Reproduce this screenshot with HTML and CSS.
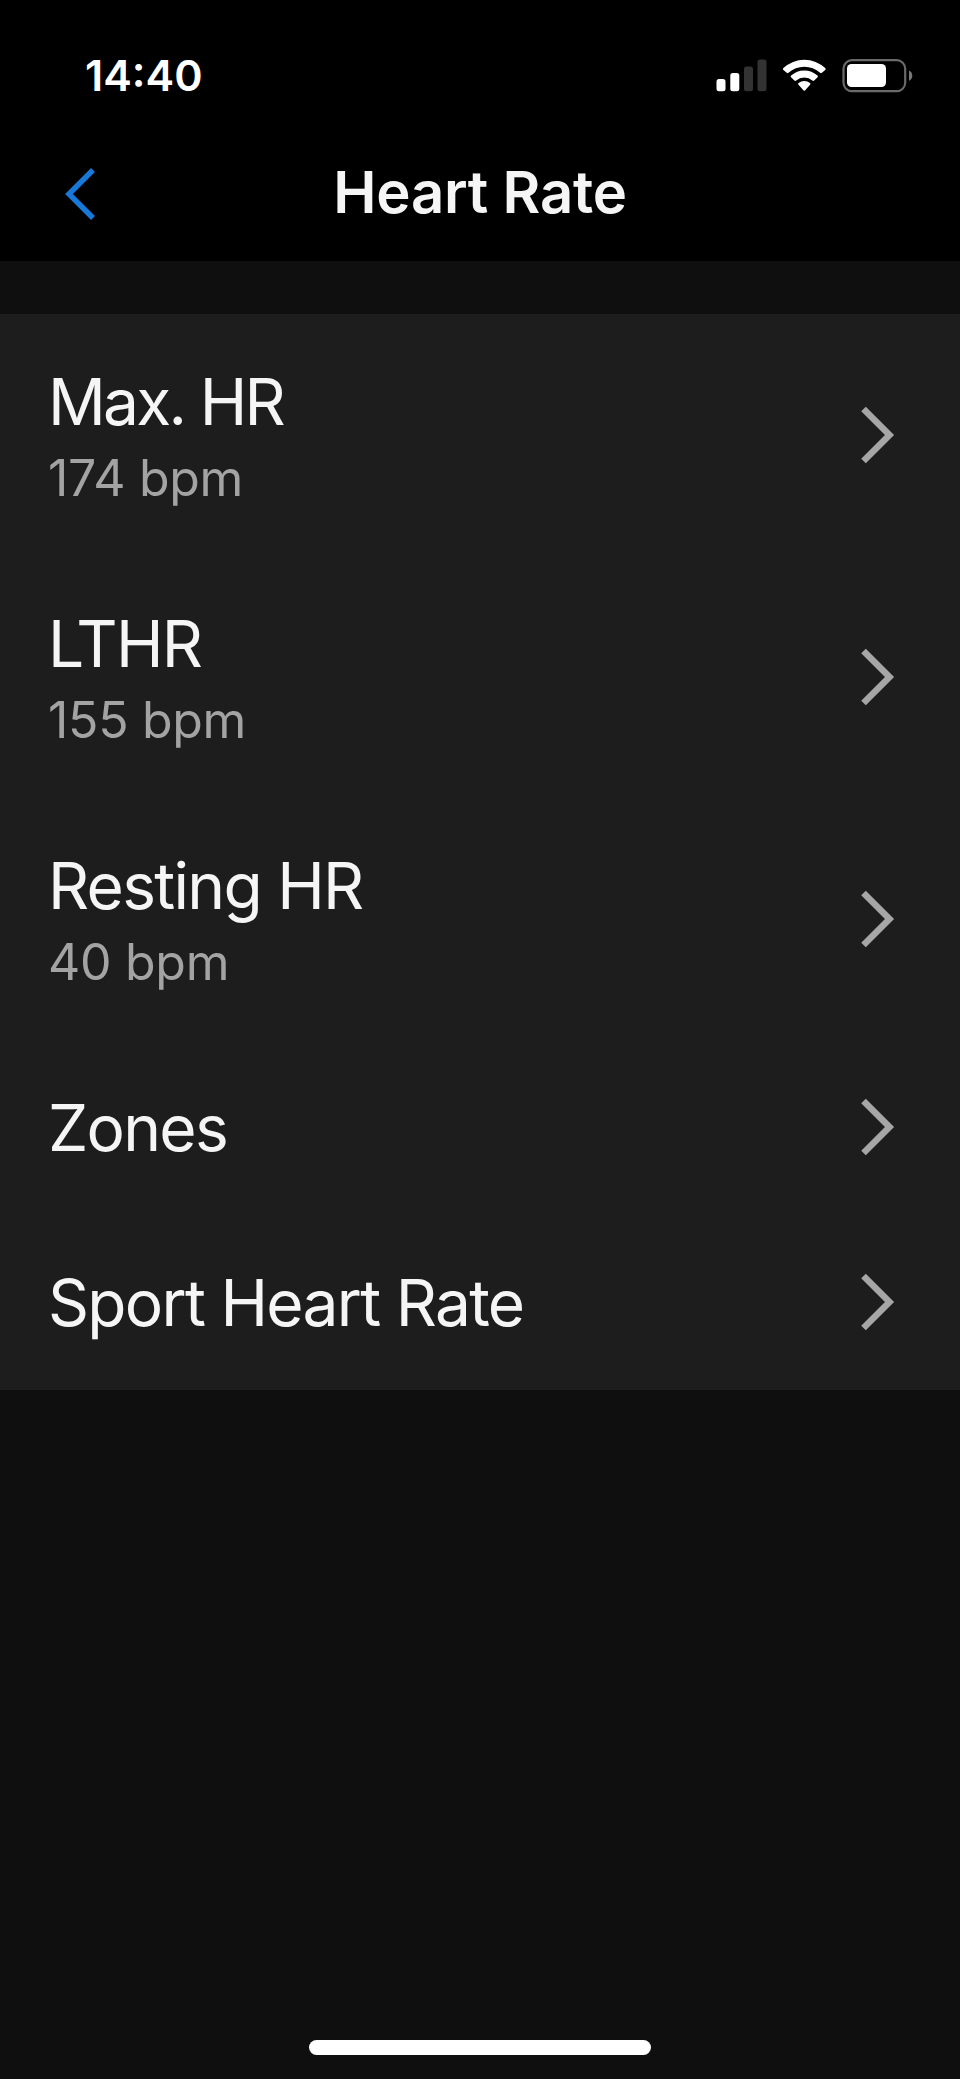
FILE: index.html
```html
<!DOCTYPE html>
<html lang="en">
<head>
<meta charset="UTF-8" />
<meta name="viewport" content="width=device-width, initial-scale=1.0" />
<title>Heart Rate</title>
<link rel="stylesheet" href="styles.css">
</head>
<body>
<div class="screen">
  <header class="header">
    <div class="status-bar">
      <span class="time">14:40</span>
      <svg class="status-icons" width="200" height="40" viewBox="714 56 200 40">
        <!-- signal -->
        <rect x="716.5" y="79" width="9" height="12.3" rx="2.5" fill="#fff"/>
        <rect x="730.3" y="73" width="9" height="18.3" rx="2.5" fill="#fff"/>
        <rect x="744" y="66.5" width="9" height="24.8" rx="2.5" fill="#333"/>
        <rect x="757.5" y="59.5" width="9" height="31.8" rx="2.5" fill="#333"/>
        <!-- wifi -->
        <g fill="#fff">
          <path d="M783.4 69.9 Q782.5 69 783.4 68.1 A30.5 30.5 0 0 1 825.2 68.1 Q826.1 69 825.2 69.9 L821.9 72.8 Q821 73.6 820.1 72.8 A23.4 23.4 0 0 0 788.5 72.8 Q787.6 73.6 786.7 72.8 Z"/>
          <path d="M791 77.3 Q790.2 76.4 791.1 75.6 A19.4 19.4 0 0 1 817.5 75.6 Q818.4 76.4 817.6 77.3 L814.2 80.5 Q813.3 81.3 812.4 80.5 A12.2 12.2 0 0 0 796.2 80.5 Q795.3 81.3 794.4 80.5 Z"/>
          <path d="M798.5 84.8 Q797.6 83.9 798.6 83.1 A9 9 0 0 1 810 83.1 Q811 83.9 810.1 84.8 L805.2 90.2 Q804.3 91.2 803.4 90.2 Z"/>
        </g>
        <!-- battery -->
        <rect x="843.5" y="60.2" width="61.7" height="31" rx="8.5" fill="none" stroke="#6a6a6a" stroke-width="2.2"/>
        <rect x="847" y="64" width="39" height="23" rx="4.5" fill="#fff"/>
        <path d="M909 70.5 Q912.3 72 912.3 75.7 Q912.3 79.3 909 80.8 Z" fill="#777"/>
      </svg>
    </div>
    <div class="nav-bar">
      <svg class="back" width="30" height="52" viewBox="0 0 30 52"><path d="M28 2 L4 26 L28 50" fill="none" stroke="#1878d8" stroke-width="5.5"/></svg>
      <h1 class="title">Heart Rate</h1>
    </div>
  </header>

  <ul class="list">
    <li class="row">
      <div class="text"><div class="name tight">Max. HR</div><div class="value">174 bpm</div></div>
      <svg class="chevron" width="34" height="58" viewBox="0 0 34 58"><path d="M2.5 3 L28.5 29 L2.5 55" /></svg>
    </li>
    <li class="row">
      <div class="text"><div class="name">LTHR</div><div class="value">155 bpm</div></div>
      <svg class="chevron" width="34" height="58" viewBox="0 0 34 58"><path d="M2.5 3 L28.5 29 L2.5 55" /></svg>
    </li>
    <li class="row">
      <div class="text"><div class="name">Resting HR</div><div class="value">40 bpm</div></div>
      <svg class="chevron" width="34" height="58" viewBox="0 0 34 58"><path d="M2.5 3 L28.5 29 L2.5 55" /></svg>
    </li>
    <li class="row small">
      <div class="name">Zones</div>
      <svg class="chevron" width="34" height="58" viewBox="0 0 34 58"><path d="M2.5 3 L28.5 29 L2.5 55" /></svg>
    </li>
    <li class="row small">
      <div class="name">Sport Heart Rate</div>
      <svg class="chevron" width="34" height="58" viewBox="0 0 34 58"><path d="M2.5 3 L28.5 29 L2.5 55" /></svg>
    </li>
  </ul>

  <div class="home-bar"></div>
</div>
</body>
</html>
```

FILE: styles.css
```css
*{box-sizing:border-box;}
body{margin:0;padding:0;font-family:Inter,"Liberation Sans",sans-serif;background:#0f0f0f;color:#f5f5f5;}
svg{display:block;flex:none;}
.screen{display:flex;flex-direction:column;height:2079px;padding-bottom:24px;}
.header{height:261px;padding-top:50px;background:#000;}
.status-bar{display:flex;justify-content:space-between;align-items:center;height:52px;padding:0 46px 0 85px;color:#fff;}
.time{font-size:43px;font-weight:600;line-height:50px;letter-spacing:0;margin-bottom:2px;}
.nav-bar{display:grid;grid-template-columns:130px 1fr 130px;align-items:center;height:72px;margin-top:54px;}
.back{margin:4px 0 0 65px;}
.title{margin:0;font-size:58px;font-weight:600;line-height:72px;text-align:center;letter-spacing:-0.2px;}
.list{margin:53px 0 0;padding:0;list-style:none;background:#1d1d1d;}
.row{display:flex;align-items:center;justify-content:space-between;height:242px;padding:0 65px 0 48px;}
.row.small{height:175px;}
.row.small .chevron{margin-bottom:1px;}
.text{display:flex;flex-direction:column;gap:7px;}
.name{font-size:64px;line-height:78px;letter-spacing:-1.7px;}
.name.tight{letter-spacing:-2.7px;}
.value{font-size:50px;line-height:60px;letter-spacing:-0.3px;color:#a3a3a3;}
.chevron path{fill:none;stroke:#a6a6a6;stroke-width:6.5;}
.home-bar{width:342px;height:15px;margin:auto auto 0;border-radius:8px;background:#fff;}
```
